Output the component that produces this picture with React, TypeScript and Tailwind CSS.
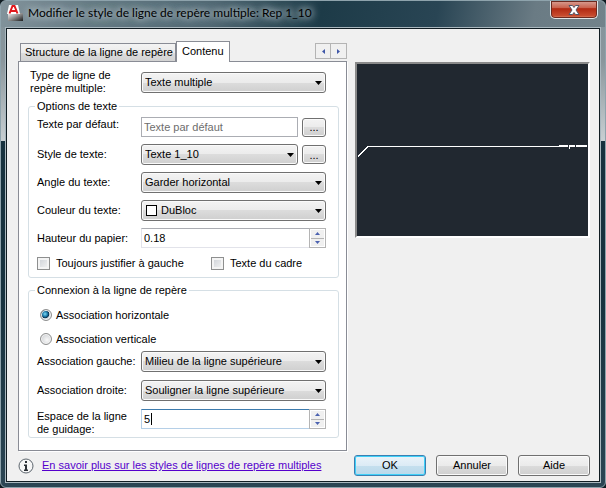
import { useState } from "react";
import type { ReactNode } from "react";

function Row({ id, label, top, children }: { id: string; label: ReactNode; top?: boolean; children: ReactNode }) {
  return (
    <div className="flex items-start">
      <label htmlFor={id} className={`w-[104px] shrink-0 leading-[13px] ${top ? "pt-px" : "pt-1"}`}>
        {label}
      </label>
      <div className="flex min-w-0 flex-1 items-center gap-1">{children}</div>
    </div>
  );
}

function Dropdown({ id, value, swatch }: { id: string; value: string; swatch?: boolean }) {
  return (
    <div className="relative min-w-0 flex-1">
      <select
        id={id}
        defaultValue={value}
        className={`block h-[21px] w-full appearance-none rounded-[3px] border border-[#707070] bg-[linear-gradient(#f3f3f3,#ebebeb_50%,#dcdcdc_50%,#cfcfcf)] pr-4 leading-[19px] shadow-[inset_0_0_0_1px_#fafafa] outline-none ${
          swatch ? "pl-[19px]" : "pl-[3px]"
        }`}
      >
        <option>{value}</option>
      </select>
      {swatch && (
        <span className="pointer-events-none absolute left-[5px] top-[5px] size-[11px] border border-black bg-white" />
      )}
      <svg viewBox="0 0 7 4" className="pointer-events-none absolute right-1 top-[9px] h-1 w-[7px]">
        <path d="M0 0h7L3.5 4z" fill="#000" />
      </svg>
    </div>
  );
}

function Spinner({ id, value, active }: { id: string; value: string; active?: boolean }) {
  const [text, setText] = useState(value);
  const step = (delta: number) => setText(String(Number(text) + delta));

  return (
    <div
      className={`relative flex h-5 min-w-0 flex-1 border bg-white ${
        active ? "border-[#b5cfe7] border-t-[#3d7bad]" : "border-[#e2e3ea] border-t-[#abadb3]"
      }`}
    >
      <input
        id={id}
        value={text}
        onChange={(e) => setText(e.target.value)}
        className="min-w-0 flex-1 px-0.5 outline-none"
      />
      {active && <span className="absolute left-[9px] top-[3px] h-3 w-px bg-black" />}
      <div className="-my-px -mr-px flex w-[17px] flex-col border border-[#b4b4b4] bg-white p-px">
        <button
          aria-label="Augmenter"
          onClick={() => step(1)}
          className="flex flex-1 items-center justify-center border-b border-[#b4b4b4] bg-[#f0f0f0]"
        >
          <svg viewBox="0 0 5 3" className="h-[3px] w-[5px]">
            <path d="M2.5 0L5 3H0z" fill="#4b62b0" />
          </svg>
        </button>
        <button
          aria-label="Diminuer"
          onClick={() => step(-1)}
          className="flex flex-1 items-center justify-center bg-[#f0f0f0]"
        >
          <svg viewBox="0 0 5 3" className="h-[3px] w-[5px]">
            <path d="M0 0h5L2.5 3z" fill="#4b62b0" />
          </svg>
        </button>
      </div>
    </div>
  );
}

function MoreButton({ label }: { label: string }) {
  return (
    <button
      aria-label={label}
      className="h-[19px] w-6 shrink-0 rounded-[3px] border border-[#707070] bg-[linear-gradient(#f3f3f3,#ebebeb_50%,#dcdcdc_50%,#cfcfcf)] leading-4 shadow-[inset_0_0_0_1px_#fafafa]"
    >
      ...
    </button>
  );
}

function Check({ label }: { label: string }) {
  return (
    <label className="flex items-center gap-1.5">
      <input
        type="checkbox"
        className="size-[13px] appearance-none border border-[#8e8f8f] bg-[linear-gradient(135deg,#cbcfd5,#f6f6f6)] shadow-[inset_0_0_0_2px_#f4f4f4] checked:bg-none checked:bg-[#4b62b0]"
      />
      {label}
    </label>
  );
}

function Radio({ label, checked, onChange }: { label: string; checked: boolean; onChange: () => void }) {
  return (
    <label className="flex h-6 items-center gap-1 pl-[3px]">
      <input
        type="radio"
        name="association"
        checked={checked}
        onChange={onChange}
        className="size-3 appearance-none rounded-full border border-[#8e8f8f] bg-[radial-gradient(circle_at_60%_60%,#f8f8f8,#c4c7cb)] shadow-[inset_0_0_0_1px_#f4f4f4] checked:bg-[radial-gradient(circle_at_40%_40%,#7fdcf5,#1b78a8_30%,#0b3350_45%,#d5dde3_55%)]"
      />
      {label}
    </label>
  );
}

function Group({ title, children }: { title: string; children: ReactNode }) {
  return (
    <fieldset className="-ml-0.5 -mr-px min-w-0 rounded-[3px] border border-[#d5dfe5] px-2">
      <legend className="-ml-0.5 px-0.5 leading-[14px]">{title}</legend>
      {children}
    </fieldset>
  );
}

function TitleBar() {
  return (
    <header className="flex h-[26px] items-start rounded-t-md bg-[linear-gradient(100deg,#82939b,#657a84_15%,#516873_35%,#1d3b48_53%,#294554_72%,#6a7b84_88%,#72838b)] pl-1.5">
      <svg viewBox="0 0 17 17" className="mt-1 size-[17px]">
        <defs>
          <linearGradient id="base" x1="0" y1="0" x2="1" y2="1">
            <stop offset="0" stopColor="#f4f4f4" />
            <stop offset="0.5" stopColor="#8c8c8c" />
            <stop offset="1" stopColor="#1a1a1a" />
          </linearGradient>
        </defs>
        <path d="M1 8h15v8H1z" fill="url(#base)" />
        <path d="M2 0h9l2 9H0z" fill="#fff" />
        <path d="M2.5 8.5L5.5 1h2l3 7.5M4 6h5" fill="none" stroke="#e0191d" strokeWidth="2" />
      </svg>
      <h1 className="ml-1 mt-1 flex-1 whitespace-nowrap font-[Lato,sans-serif] text-[12px] leading-4 text-black [text-shadow:0_0_6px_#b5c2c8,0_0_8px_#b5c2c8,0_0_10px_#a5b4bb]">
        Modifier le style de ligne de repère multiple: Rep 1_10
      </h1>
      <button
        aria-label="Fermer"
        className="mr-[7px] flex h-[18px] w-12 items-center justify-center rounded-b-[5px] border border-t-0 border-[#dfe5e8] bg-[linear-gradient(#d9a196,#c9614d_40%,#b12a13_45%,#c74a2e_85%,#e08d6c)] shadow-[inset_0_0_0_1px_#6d2a20]"
      >
        <svg viewBox="0 0 12 10" className="h-2.5 w-3">
          <path
            d="M1 .5h3.500L6 2.500 7.500.5H11L8 5l3 4.500H7.500L6 7.500 4.500 9.500H1L4 5z"
            fill="#fff"
            stroke="#535666"
          />
        </svg>
      </button>
    </header>
  );
}

function Preview() {
  return (
    <div className="mt-[21px] h-44 border-2 border-b-white border-l-[#8a8a8a] border-r-white border-t-[#8a8a8a] bg-[#212830]">
      <svg viewBox="0 0 231 172" className="size-full" shapeRendering="crispEdges">
        <path d="M1 92.500L11 82.500H203" fill="none" stroke="#fff" />
        <path d="M202 82h9M212 82h6M219 82h11" fill="none" stroke="#fff" strokeWidth="2" />
        <path d="M212.500 83v2" stroke="#fff" />
      </svg>
    </div>
  );
}

export default function App() {
  const [association, setAssociation] = useState("horizontale");

  return (
    <div className="min-h-screen bg-[#101c22] font-['Liberation_Sans',Arial,sans-serif] text-[11px] text-black">
      <div className="flex min-h-screen flex-col rounded-md border border-[#8ea3ac] bg-[linear-gradient(#82939b,#8a969c_60px,#c8cfd2_140px,#17323f_140px,#17323f_300px,#2b4553)]">
        <TitleBar />

        <main className="mx-1 mb-1 flex flex-1 flex-col border border-[#a9b7be]">
          <div className="flex flex-1 flex-col border border-[#101c22] bg-[#f0f0f0] pb-1 pl-[11px] pr-[9px] pt-3">
            <div className="grid grid-cols-[7fr_5fr] gap-2">
              <div>
                {/* Tabs */}
                <div className="flex h-5 items-end" role="tablist">
                  <button
                    role="tab"
                    aria-selected={false}
                    className="ml-0.5 h-[18px] whitespace-nowrap border border-b-0 border-[#898c95] bg-[linear-gradient(#f3f3f3,#ebebeb_50%,#dddddd_50%,#d2d2d2)] pl-1 pr-0.5"
                  >
                    Structure de la ligne de repère
                  </button>
                  <button
                    role="tab"
                    aria-selected
                    className="relative -mb-px h-[21px] border border-b-0 border-[#898c95] bg-white px-[5px] pb-0.5"
                  >
                    Contenu
                  </button>
                  <div className="mb-0.5 ml-auto flex">
                    <button
                      aria-label="Onglet précédent"
                      className="flex size-4 items-center justify-center border border-[#b4b4b4] bg-[#f0f0f0]"
                    >
                      <svg viewBox="0 0 3 5" className="h-[5px] w-[3px]">
                        <path d="M3 0v5L0 2.500z" fill="#3f57a8" />
                      </svg>
                    </button>
                    <button
                      aria-label="Onglet suivant"
                      className="flex size-4 items-center justify-center border border-l-0 border-[#b4b4b4] bg-[#f0f0f0]"
                    >
                      <svg viewBox="0 0 3 5" className="h-[5px] w-[3px]">
                        <path d="M0 0v5l3-2.500z" fill="#3f57a8" />
                      </svg>
                    </button>
                  </div>
                </div>

                {/* Tab content */}
                <div className="border border-[#898c95] bg-white pb-3 pl-[11px] pr-2 pt-[7px] shadow-[1px_1px_0_#fff]">
                  <div className="mb-1 flex items-center pr-3">
                    <label htmlFor="type" className="w-[111px] shrink-0 leading-[13px]">
                      Type de ligne de
                      <br />
                      repère multiple:
                    </label>
                    <Dropdown id="type" value="Texte multiple" />
                  </div>

                  <Group title="Options de texte">
                    <div className="flex flex-col gap-[7px] pb-[7px] pr-1 pt-1">
                      <Row id="default-text" label="Texte par défaut:" top>
                        <input
                          id="default-text"
                          placeholder="Texte par défaut"
                          className="h-5 min-w-0 flex-1 border border-[#abadb3] bg-white px-0.5 outline-none placeholder:text-[#6d6d6d]"
                        />
                        <MoreButton label="Modifier le texte par défaut" />
                      </Row>
                      <Row id="style" label="Style de texte:">
                        <Dropdown id="style" value="Texte 1_10" />
                        <MoreButton label="Modifier le style de texte" />
                      </Row>
                      <Row id="angle" label="Angle du texte:">
                        <Dropdown id="angle" value="Garder horizontal" />
                      </Row>
                      <Row id="color" label="Couleur du texte:">
                        <Dropdown id="color" value="DuBloc" swatch />
                      </Row>
                      <Row id="height" label="Hauteur du papier:">
                        <Spinner id="height" value="0.18" />
                      </Row>
                      <div className="grid grid-cols-[174px_1fr] pt-0.5 leading-[13px]">
                        <Check label="Toujours justifier à gauche" />
                        <Check label="Texte du cadre" />
                      </div>
                    </div>
                  </Group>

                  <div className="mt-[5px]">
                    <Group title="Connexion à la ligne de repère">
                      <div className="pr-1 pt-1.5">
                        <Radio
                          label="Association horizontale"
                          checked={association === "horizontale"}
                          onChange={() => setAssociation("horizontale")}
                        />
                        <Radio
                          label="Association verticale"
                          checked={association === "verticale"}
                          onChange={() => setAssociation("verticale")}
                        />
                      </div>
                      <div className="flex flex-col gap-2 pb-px pr-1">
                        <Row id="left" label="Association gauche:">
                          <Dropdown id="left" value="Milieu de la ligne supérieure" />
                        </Row>
                        <Row id="right" label="Association droite:">
                          <Dropdown id="right" value="Souligner la ligne supérieure" />
                        </Row>
                        <Row
                          id="gap"
                          top
                          label={
                            <>
                              Espace de la ligne
                              <br />
                              de guidage:
                            </>
                          }
                        >
                          <Spinner id="gap" value="5" active />
                        </Row>
                      </div>
                    </Group>
                  </div>
                </div>
              </div>

              <Preview />
            </div>

            {/* Footer */}
            <footer className="mt-1 flex items-center">
              <svg viewBox="0 0 16 16" className="size-4">
                <circle cx="8" cy="8" r="7" fill="#f6f6f6" stroke="#5d666e" />
                <path d="M7 3h2v2H7zM6 6.500h3v5h1V13H6v-1.500h1V8H6z" fill="#2b3036" />
              </svg>
              <a href="#styles" className="ml-2 flex-1 whitespace-nowrap text-[#5500cc] underline">
                En savoir plus sur les styles de lignes de repère multiples
              </a>
              <div className="flex gap-2.5">
                <button className="h-[21px] w-18 rounded-[3px] border border-[#3c7fb1] bg-[linear-gradient(#eaf3f9,#dcebf5_50%,#c5dfee_50%,#b9d9eb)] shadow-[inset_0_0_0_1px_#3fd0f8]">
                  OK
                </button>
                <button className="h-[21px] w-18 rounded-[3px] border border-[#707070] bg-[linear-gradient(#f3f3f3,#ebebeb_50%,#dcdcdc_50%,#cfcfcf)] shadow-[inset_0_0_0_1px_#fafafa]">
                  Annuler
                </button>
                <button className="h-[21px] w-18 rounded-[3px] border border-[#707070] bg-[linear-gradient(#f3f3f3,#ebebeb_50%,#dcdcdc_50%,#cfcfcf)] shadow-[inset_0_0_0_1px_#fafafa]">
                  Aide
                </button>
              </div>
            </footer>
          </div>
        </main>
      </div>
    </div>
  );
}
